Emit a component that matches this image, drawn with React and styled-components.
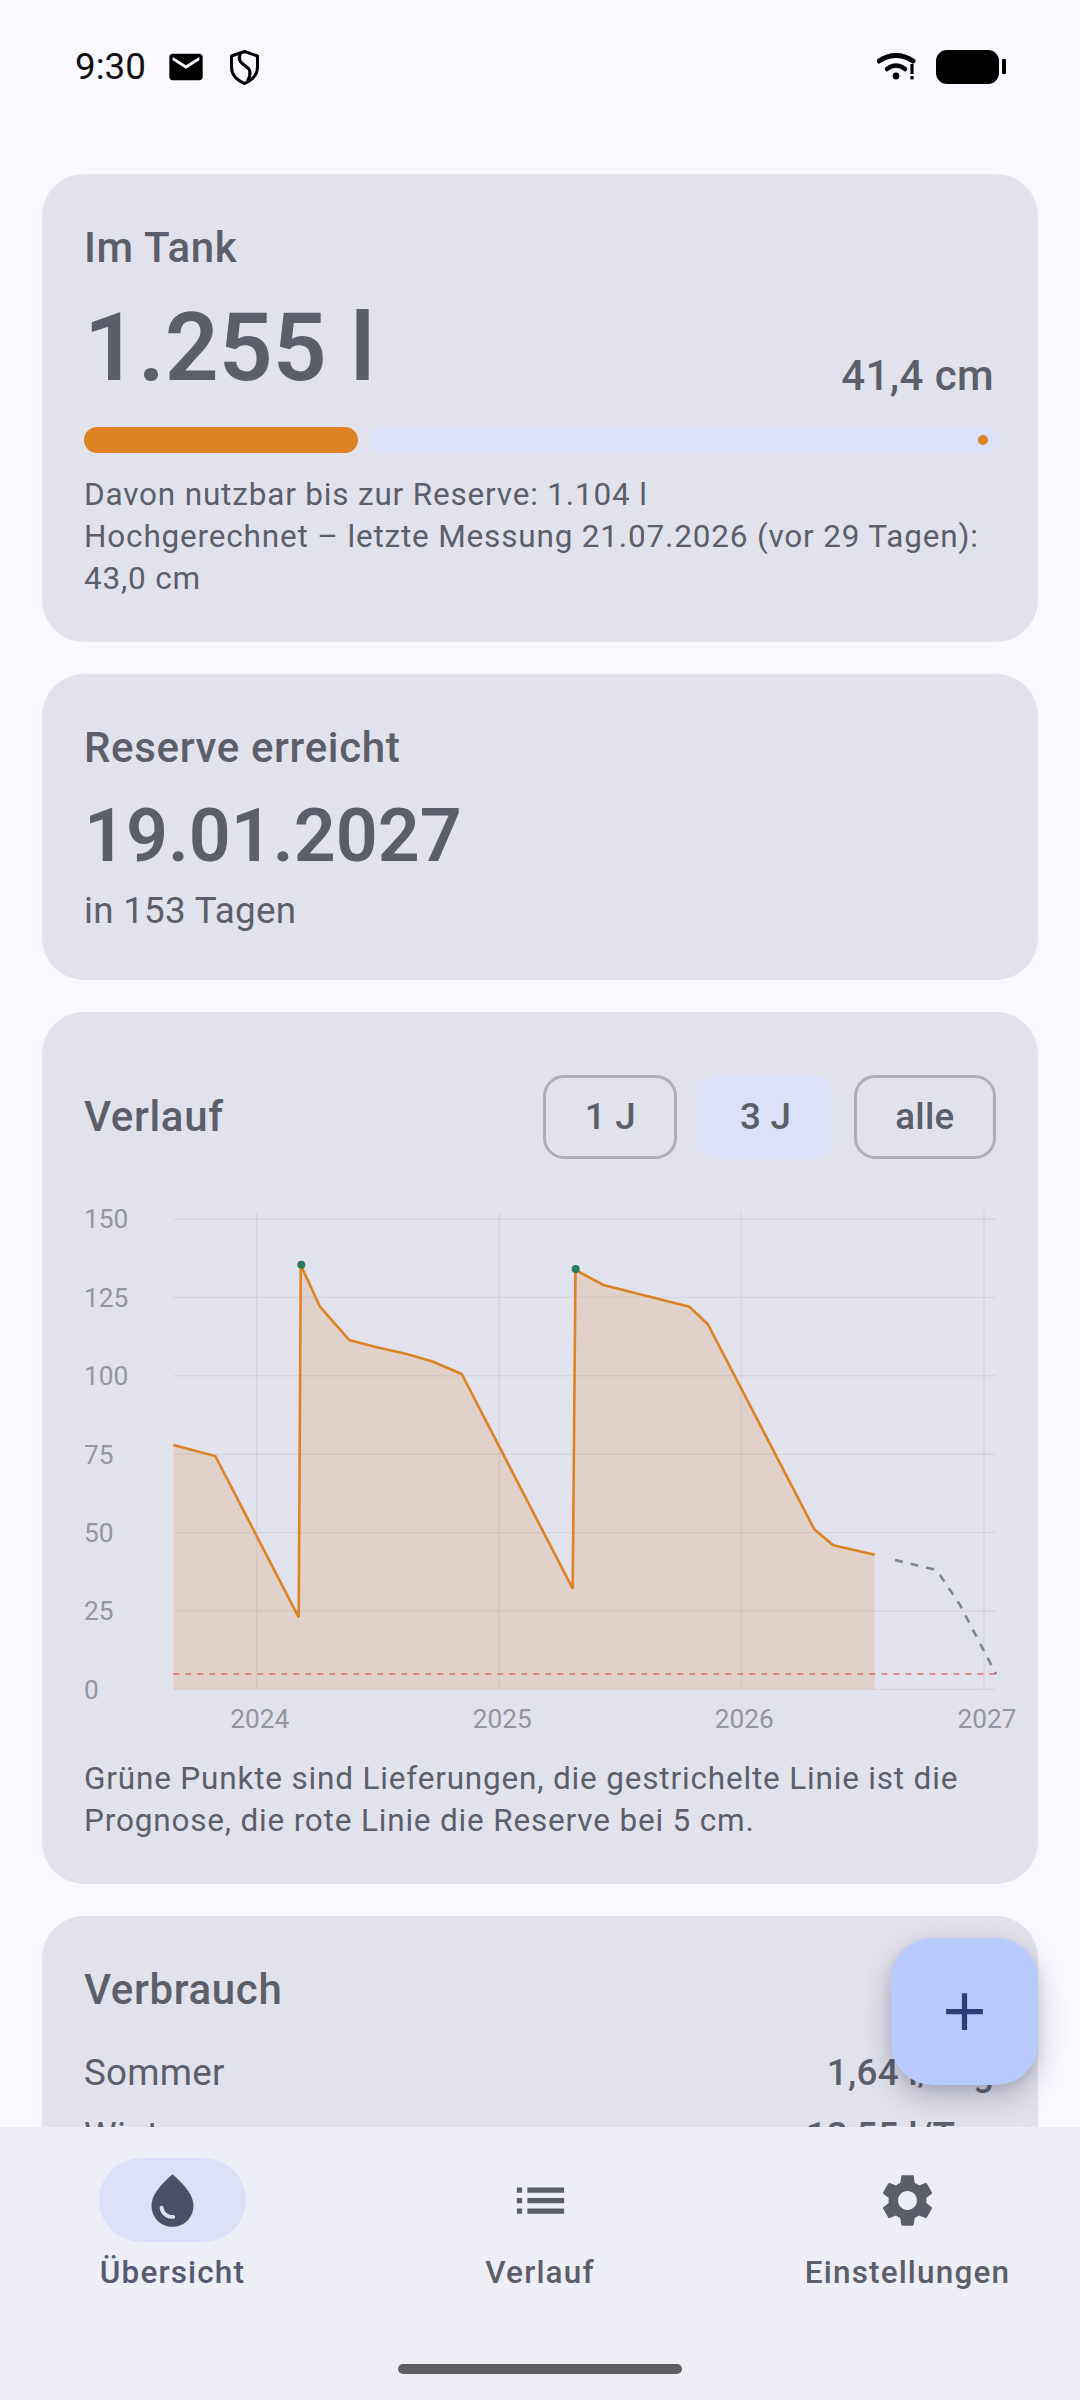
import styled, { createGlobalStyle } from "styled-components";

const TEXT = "#5c5e6a";

const GlobalStyle = createGlobalStyle`
    html, body {
        margin: 0;
        padding: 0;
        background: #faf8ff;
    }
    * {
        box-sizing: border-box;
    }
`;

// chart data, in page pixels
const GRID_Y = [
    { label: "150", y: 1219 },
    { label: "125", y: 1297.4 },
    { label: "100", y: 1375.8 },
    { label: "75", y: 1454.2 },
    { label: "50", y: 1532.6 },
    { label: "25", y: 1611 },
    { label: "0", y: 1689.4 },
];
const GRID_X = [
    { label: "2024", x: 256.7 },
    { label: "2025", x: 499.3 },
    { label: "2026", x: 741.3 },
    { label: "2027", x: 984 },
];
const LINE = [
    [173.3, 1445], [215.3, 1456], [298.7, 1617.3], [300.8, 1265], [320, 1306.7],
    [349.3, 1340], [376.7, 1347.3], [406.7, 1354], [433.3, 1361.7], [461.7, 1374],
    [572.7, 1588.7], [575.5, 1270], [603.3, 1285], [689.3, 1306.7], [707.7, 1324],
    [814.3, 1529.3], [833.3, 1545.3], [874.7, 1554.7],
];
const FORECAST = [[895, 1560], [933.3, 1569.3], [940, 1575], [960, 1605], [996, 1674]];
const toPoints = (pts) => pts.map((p) => p.join(",")).join(" ");

const Chart = () => (
    <ChartSvg viewBox="84 1190 954 547">
        {GRID_Y.map((g) => (
            <g key={g.label}>
                <line x1="173.3" x2="996" y1={g.y} y2={g.y} stroke="#5a5a62" strokeOpacity="0.09" strokeWidth="1.4" />
                <text x="84" y={g.y + 9.3} fontSize="26.25" fill="#94959d">{g.label}</text>
            </g>
        ))}
        {GRID_X.map((g) => (
            <g key={g.label}>
                <line x1={g.x} x2={g.x} y1="1212" y2="1689.4" stroke="#5a5a62" strokeOpacity="0.09" strokeWidth="1.4" />
                <text x={g.x + 3} y="1728" fontSize="26.25" fill="#94959d" textAnchor="middle">{g.label}</text>
            </g>
        ))}
        <polygon points={`173.3,1689.4 ${toPoints(LINE)} 874.7,1689.4`} fill="#dd8225" fillOpacity="0.17" />
        <line x1="173.3" x2="996" y1="1674" y2="1674" stroke="#d9705f" strokeOpacity="0.75" strokeWidth="2.2" strokeDasharray="6 6" />
        <polyline points={toPoints(LINE)} fill="none" stroke="#dd8225" strokeWidth="2.6" />
        <polyline points={toPoints(FORECAST)} fill="none" stroke="#7b8796" strokeWidth="2.6" strokeDasharray="8 8" />
        <circle cx="301.3" cy="1264.7" r="4" fill="#2a7d5c" />
        <circle cx="575.7" cy="1269" r="4" fill="#2a7d5c" />
    </ChartSvg>
);

const App = () => {
    return (
        <Screen>
            <GlobalStyle />
            <StatusBar>
                <StatusGroup>
                    <Clock>9:30</Clock>
                    <svg width="40" height="40" viewBox="0 0 24 24" fill="#000">
                        <path d="M20 4H4c-1.1 0-1.99.9-1.99 2L2 18c0 1.1.9 2 2 2h16c1.1 0 2-.9 2-2V6c0-1.1-.9-2-2-2zm0 4l-8 5-8-5V6l8 5 8-5v2z" />
                    </svg>
                    <svg width="37.5" height="40" viewBox="-1.5 0 37.5 40" fill="none" stroke="#000" strokeWidth="3">
                        <path d="M18 4.5 L31 9 V20 C31 28 26 33 18 36.5 C10 33 5 28 5 20 V9 Z" strokeLinejoin="round" />
                        <path d="M14 7 C11 12 14 16 19 19 C24 22 25 27 21 34" />
                    </svg>
                </StatusGroup>
                <StatusGroup>
                    <svg width="40" height="32" viewBox="0 0 40 32" fill="#000">
                        <path d="M2 10 Q19 -1 36 10" fill="none" stroke="#000" strokeWidth="5" strokeLinecap="round" />
                        <path d="M10 18 Q19 11 28 18" fill="none" stroke="#000" strokeWidth="4.5" strokeLinecap="round" />
                        <circle cx="19" cy="25" r="3.4" />
                        <rect x="33.4" y="13" width="3.2" height="10" />
                        <rect x="33.4" y="25" width="3.2" height="3.4" />
                    </svg>
                    <svg width="72" height="36" viewBox="0 0 72 36" fill="#000">
                        <rect x="0" y="1" width="63" height="34" rx="11" />
                        <rect x="66" y="10" width="4" height="15" rx="1" />
                    </svg>
                </StatusGroup>
            </StatusBar>

            <Scroller>
                <Card>
                    <CardTitle>Im Tank</CardTitle>
                    <LevelRow>
                        <BigValue>1.255 l</BigValue>
                        <SideValue>41,4 cm</SideValue>
                    </LevelRow>
                    <Progress>
                        <ProgressFill $percent={30} />
                        <ProgressTrack>
                            <ProgressStop />
                        </ProgressTrack>
                    </Progress>
                    <SmallText>
                        Davon nutzbar bis zur Reserve: 1.104 l<br />
                        Hochgerechnet – letzte Messung 21.07.2026 (vor 29 Tagen): 43,0 cm
                    </SmallText>
                </Card>

                <Card>
                    <CardTitle>Reserve erreicht</CardTitle>
                    <DateValue>19.01.2027</DateValue>
                    <BodyText $top={1.5}>in 153 Tagen</BodyText>
                </Card>

                <Card>
                    <ChartHeader>
                        <CardTitle>Verlauf</CardTitle>
                        <Chips>
                            <Chip>1 J</Chip>
                            <Chip $active>3 J</Chip>
                            <Chip>alle</Chip>
                        </Chips>
                    </ChartHeader>
                    <Chart />
                    <SmallText>
                        Grüne Punkte sind Lieferungen, die gestrichelte Linie ist die Prognose, die rote Linie die Reserve bei 5 cm.
                    </SmallText>
                </Card>

                <Card>
                    <CardTitle>Verbrauch</CardTitle>
                    <UsageRows>
                        <UsageRow>
                            <BodyText>Sommer</BodyText>
                            <UsageValue>1,64 l/Tag</UsageValue>
                        </UsageRow>
                        <UsageRow>
                            <BodyText>Winter</BodyText>
                            <UsageValue>12,55 l/Tag</UsageValue>
                        </UsageRow>
                    </UsageRows>
                </Card>
            </Scroller>

            <Fab>
                <svg width="63" height="63" viewBox="0 0 24 24" fill="#2b3f75">
                    <path d="M19 13h-6v6h-2v-6H5v-2h6V5h2v6h6v2z" />
                </svg>
            </Fab>

            <Nav>
                <NavItems>
                    <NavItem>
                        <NavIcon $active>
                            <svg width="63" height="63" viewBox="0 0 24 24" fill="#4a5068" fillRule="evenodd">
                                <path d="M12 2c-5.33 4.55-8 8.48-8 11.8 0 4.98 3.8 8.2 8 8.2s8-3.22 8-8.2c0-3.32-2.67-7.25-8-11.8zM7.83 14c.37 0 .67.26.74.62.41 2.22 2.28 2.98 3.64 2.87.43-.02.79.32.79.75 0 .4-.32.73-.72.75-2.13.13-4.62-1.09-5.19-4.12-.08-.45.28-.87.74-.87z" />
                            </svg>
                        </NavIcon>
                        <NavLabel $active>Übersicht</NavLabel>
                    </NavItem>
                    <NavItem>
                        <NavIcon>
                            <svg width="63" height="63" viewBox="0 0 24 24" fill={TEXT}>
                                <path d="M3 13h2v-2H3v2zm0 4h2v-2H3v2zm0-8h2V7H3v2zm4 4h14v-2H7v2zm0 4h14v-2H7v2zM7 7v2h14V7H7z" />
                            </svg>
                        </NavIcon>
                        <NavLabel>Verlauf</NavLabel>
                    </NavItem>
                    <NavItem>
                        <NavIcon>
                            <svg width="63" height="63" viewBox="0 0 24 24" fill={TEXT} fillRule="evenodd">
                                <path d="M19.14 12.94c.04-.3.06-.61.06-.94 0-.32-.02-.64-.07-.94l2.03-1.58c.18-.14.23-.41.12-.61l-1.92-3.32c-.12-.22-.37-.29-.59-.22l-2.39.96c-.5-.38-1.03-.7-1.62-.94l-.36-2.54c-.04-.24-.24-.41-.48-.41h-3.84c-.24 0-.43.17-.47.41l-.36 2.54c-.59.24-1.13.57-1.62.94l-2.39-.96c-.22-.08-.47 0-.59.22L2.74 8.87c-.12.21-.08.47.12.61l2.03 1.58c-.05.3-.09.63-.09.94s.02.64.07.94l-2.03 1.58c-.18.14-.23.41-.12.61l1.92 3.32c.12.22.37.29.59.22l2.39-.96c.5.38 1.03.7 1.62.94l.36 2.54c.05.24.24.41.48.41h3.84c.24 0 .44-.17.47-.41l.36-2.54c.59-.24 1.13-.56 1.62-.94l2.39.96c.22.08.47 0 .59-.22l1.92-3.32c.12-.22.07-.47-.12-.61l-2.01-1.58zM12 15.6c-1.98 0-3.6-1.62-3.6-3.6s1.62-3.6 3.6-3.6 3.6 1.62 3.6 3.6-1.62 3.6-3.6 3.6z" />
                            </svg>
                        </NavIcon>
                        <NavLabel>Einstellungen</NavLabel>
                    </NavItem>
                </NavItems>
                <HomeHandle />
            </Nav>
        </Screen>
    );
};

const Screen = styled.div`
    position: relative;
    width: 1080px;
    height: 2400px;
    display: flex;
    flex-direction: column;
    overflow: hidden;
    background: #faf8ff;
    color: ${TEXT};
    font-family: Roboto, "Liberation Sans", sans-serif;
`;

const StatusBar = styled.div`
    height: 130px;
    flex-shrink: 0;
    padding: 3px 72.5px 0 75px;
    display: flex;
    align-items: center;
    justify-content: space-between;
`;

const StatusGroup = styled.div`
    display: flex;
    align-items: center;
    gap: 19px;
`;

const Clock = styled.span`
    font-size: 36.75px;
    color: #111;
    margin-right: 1.5px;
`;

const Scroller = styled.div`
    flex: 1;
    min-height: 0;
    overflow: hidden;
    padding: 44px 42px 0;
    display: flex;
    flex-direction: column;
    gap: 32px;
`;

const Card = styled.section`
    flex-shrink: 0;
    padding: 42px;
    background: #e1e2ec;
    border-radius: 42px;
`;

const CardTitle = styled.h2`
    margin: 0;
    font-size: 42px;
    line-height: 63px;
    font-weight: 500;
    letter-spacing: 0.65px;
`;

const LevelRow = styled.div`
    margin-top: 10.5px;
    display: flex;
    align-items: flex-end;
    justify-content: space-between;
`;

const BigValue = styled.div`
    font-size: 94.5px;
    line-height: 115.5px;
    font-weight: 600;
`;

const SideValue = styled.div`
    margin: 0 2px -1.5px 0;
    font-size: 42px;
    line-height: 63px;
    font-weight: 500;
    letter-spacing: 0.39px;
`;

const Progress = styled.div`
    margin-top: 21.7px;
    height: 26.25px;
    display: flex;
    gap: 11px;
`;

const ProgressFill = styled.div`
    width: ${(props) => props.$percent}%;
    background: #dc8325;
    border-radius: 13px;
`;

const ProgressTrack = styled.div`
    flex: 1;
    display: flex;
    align-items: center;
    justify-content: flex-end;
    padding-right: 8px;
    background: #dce1f9;
    border-radius: 13px;
`;

const ProgressStop = styled.div`
    width: 10.5px;
    height: 10.5px;
    border-radius: 50%;
    background: #dc8325;
`;

const SmallText = styled.p`
    margin: 21px 0 0;
    font-size: 31.5px;
    line-height: 42px;
    letter-spacing: 0.82px;
`;

const DateValue = styled.div`
    margin-top: 10.5px;
    font-size: 73.5px;
    line-height: 94.5px;
    font-weight: 600;
`;

const BodyText = styled.div`
    margin-top: ${(props) => props.$top || 0}px;
    font-size: 36.75px;
    line-height: 52.5px;
    letter-spacing: 0.28px;
`;

const ChartHeader = styled.div`
    height: 126px;
    display: flex;
    align-items: center;
    justify-content: space-between;
`;

const Chips = styled.div`
    display: flex;
    gap: 21px;
`;

const Chip = styled.div`
    height: 84px;
    padding: 0 38.5px;
    display: flex;
    align-items: center;
    border-radius: 21px;
    font-size: 36.75px;
    font-weight: 500;
    letter-spacing: 0.26px;
    background: ${(props) => (props.$active ? "#dce1f9" : "transparent")};
    border: 3px solid ${(props) => (props.$active ? "#dce1f9" : "#adaeb9")};
`;

const ChartSvg = styled.svg`
    display: block;
    width: 954px;
    height: 547px;
    margin: 10px -42px 0 0;
    font-family: Roboto, "Liberation Sans", sans-serif;
`;

const UsageRows = styled.div`
    margin-top: 26.5px;
    display: flex;
    flex-direction: column;
    gap: 10px;
`;

const UsageRow = styled.div`
    display: flex;
    justify-content: space-between;
`;

const UsageValue = styled.div`
    margin-right: 2px;
    font-size: 36.75px;
    line-height: 52.5px;
    font-weight: 500;
    letter-spacing: 0.28px;
`;

const Fab = styled.div`
    position: absolute;
    right: 42px;
    bottom: 315px;
    width: 147px;
    height: 147px;
    display: flex;
    align-items: center;
    justify-content: center;
    border-radius: 42px;
    background: #b9cbfe;
    box-shadow: 0 12px 30px rgba(60, 60, 80, 0.3), 0 3px 8px rgba(60, 60, 80, 0.12);
`;

const Nav = styled.nav`
    position: relative;
    height: 273px;
    flex-shrink: 0;
    padding-top: 31px;
    display: flex;
    flex-direction: column;
    background: #edeef6;
`;

const NavItems = styled.div`
    display: grid;
    grid-template-columns: repeat(3, 345px);
    column-gap: 22.5px;
`;

const NavItem = styled.div`
    display: flex;
    flex-direction: column;
    align-items: center;
`;

const NavIcon = styled.div`
    width: 147px;
    height: 84px;
    display: flex;
    align-items: center;
    justify-content: center;
    border-radius: 42px;
    background: ${(props) => (props.$active ? "#dce1f9" : "transparent")};
`;

const NavLabel = styled.div`
    margin-top: 10px;
    font-size: 31.5px;
    line-height: 42px;
    font-weight: 500;
    letter-spacing: 1.15px;
    color: ${(props) => (props.$active ? "#555a70" : TEXT)};
`;

const HomeHandle = styled.div`
    width: 284px;
    height: 10px;
    margin: auto auto 26px;
    border-radius: 5px;
    background: #5f5f63;
`;

export default App;
